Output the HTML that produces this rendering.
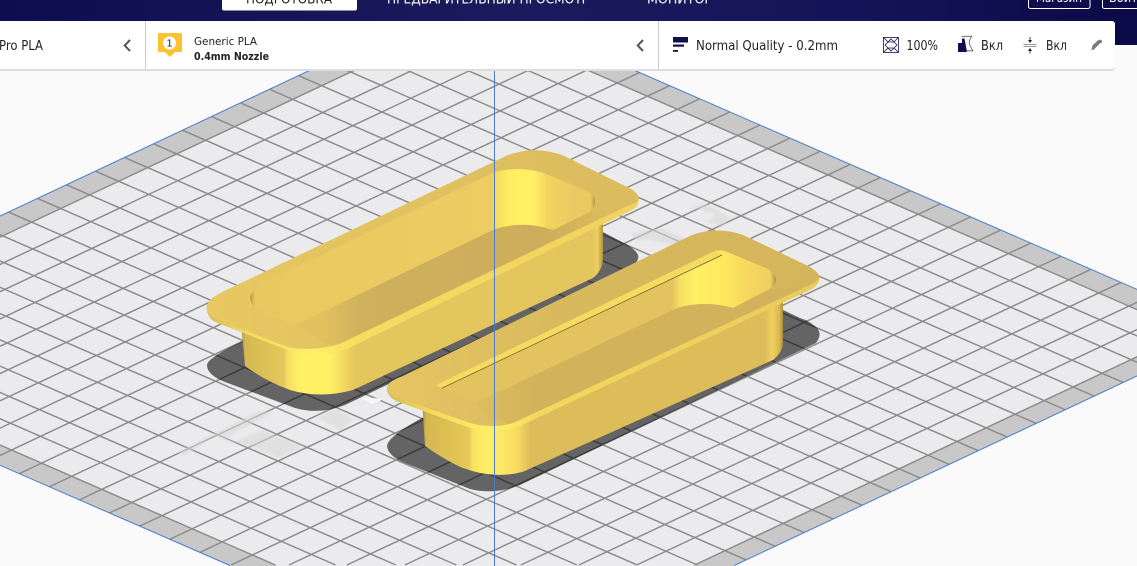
<!DOCTYPE html>
<html lang="ru">
<head>
<meta charset="utf-8">
<title>Cura</title>
<style>
html,body{margin:0;padding:0;width:1137px;height:566px;overflow:hidden;background:#fafafa}
svg{display:block;position:absolute;left:0;top:0}
text{font-family:"DejaVu Sans","Liberation Sans",sans-serif;fill:#222}
</style>
</head>
<body>
<svg width="1137" height="566" viewBox="0 0 1137 566" xmlns="http://www.w3.org/2000/svg">
<defs>
<linearGradient id="hdr" x1="0" x2="1137" y1="0" y2="0" gradientUnits="userSpaceOnUse">
<stop offset="0" stop-color="#0d0e4f"/><stop offset=".45" stop-color="#1a1a5c"/><stop offset=".75" stop-color="#14145a"/><stop offset="1" stop-color="#0a0a48"/>
</linearGradient>
<linearGradient id="wallA" x1="241" x2="603" y1="0" y2="0" gradientUnits="userSpaceOnUse">
<stop offset="0" stop-color="#a88c40"/><stop offset=".012" stop-color="#d5b850"/><stop offset=".12" stop-color="#e5c85c"/><stop offset=".127" stop-color="#f6dc60"/><stop offset=".16" stop-color="#fff066"/><stop offset=".245" stop-color="#fff066"/><stop offset=".29" stop-color="#f2d45e"/><stop offset=".315" stop-color="#e4c65f"/><stop offset=".97" stop-color="#e4c65f"/><stop offset=".985" stop-color="#f0d060"/><stop offset="1" stop-color="#b0943f"/>
</linearGradient>
<linearGradient id="wallB" x1="422" x2="783" y1="0" y2="0" gradientUnits="userSpaceOnUse">
<stop offset="0" stop-color="#a88c40"/><stop offset=".012" stop-color="#d5b850"/><stop offset=".13" stop-color="#e6c858"/><stop offset=".14" stop-color="#f8e261"/><stop offset=".18" stop-color="#fff066"/><stop offset=".26" stop-color="#f9de60"/><stop offset=".3" stop-color="#dcbd5a"/><stop offset=".95" stop-color="#dcbd5a"/><stop offset=".97" stop-color="#f0d05f"/><stop offset=".99" stop-color="#d8b850"/><stop offset="1" stop-color="#a88c40"/>
</linearGradient>
<linearGradient id="rimA" x1="206" x2="640" y1="0" y2="0" gradientUnits="userSpaceOnUse">
<stop offset="0" stop-color="#d8bb50"/><stop offset=".1" stop-color="#f4d95f"/><stop offset=".25" stop-color="#fff066"/><stop offset=".35" stop-color="#f7dc60"/><stop offset="1" stop-color="#f0d25e"/>
</linearGradient>
<linearGradient id="rimB" x1="387" x2="820" y1="0" y2="0" gradientUnits="userSpaceOnUse">
<stop offset="0" stop-color="#d8bb50"/><stop offset=".1" stop-color="#f4d95f"/><stop offset=".25" stop-color="#fff066"/><stop offset=".35" stop-color="#f3d85f"/><stop offset="1" stop-color="#eacb5c"/>
</linearGradient>
<linearGradient id="topA" x1="206" x2="640" y1="0" y2="0" gradientUnits="userSpaceOnUse">
<stop offset="0" stop-color="#e8c862"/><stop offset="1" stop-color="#dabb5e"/>
</linearGradient>
<linearGradient id="topB" x1="387" x2="820" y1="0" y2="0" gradientUnits="userSpaceOnUse">
<stop offset="0" stop-color="#e6c662"/><stop offset=".4" stop-color="#d8b95d"/><stop offset="1" stop-color="#d4b55c"/>
</linearGradient>
<linearGradient id="holeA" x1="250" x2="596" y1="0" y2="0" gradientUnits="userSpaceOnUse">
<stop offset="0" stop-color="#b89c48"/><stop offset=".015" stop-color="#e8c860"/><stop offset=".7" stop-color="#edcd62"/><stop offset=".713" stop-color="#f5dc5f"/><stop offset=".75" stop-color="#ffee60"/><stop offset=".82" stop-color="#fff066"/><stop offset=".86" stop-color="#f3d45e"/><stop offset=".94" stop-color="#eac963"/><stop offset=".985" stop-color="#eac963"/><stop offset="1" stop-color="#a58a40"/>
</linearGradient>
<linearGradient id="holeB" x1="437" x2="777" y1="0" y2="0" gradientUnits="userSpaceOnUse">
<stop offset="0" stop-color="#e3c360"/><stop offset=".69" stop-color="#e3c360"/><stop offset=".715" stop-color="#f7e060"/><stop offset=".76" stop-color="#fff066"/><stop offset=".85" stop-color="#ffe75f"/><stop offset=".91" stop-color="#f6d85f"/><stop offset=".98" stop-color="#f0cf62"/><stop offset="1" stop-color="#a58a40"/>
</linearGradient>
<linearGradient id="floorA" x1="295" x2="600" y1="0" y2="0" gradientUnits="userSpaceOnUse">
<stop offset="0" stop-color="#e4c461"/><stop offset=".1" stop-color="#e0c05f"/><stop offset=".22" stop-color="#cfb15c"/><stop offset=".8" stop-color="#cbad5b"/><stop offset="1" stop-color="#d9ba5d"/>
</linearGradient>
<linearGradient id="floorB" x1="475" x2="800" y1="0" y2="0" gradientUnits="userSpaceOnUse">
<stop offset="0" stop-color="#ddbe5f"/><stop offset=".18" stop-color="#d2b35c"/><stop offset="1" stop-color="#d2b35c"/>
</linearGradient>
<filter id="bl" x="-10%" y="-10%" width="120%" height="120%"><feGaussianBlur stdDeviation="1"/></filter>
</defs>

<rect width="1137" height="566" fill="#fafafa"/>

<!-- build plate -->
<path d="M465.85-3.16L1232.5 331L733.2 566H231.2L-274.8 345.46Z" fill="#c8c8c8"/>
<path d="M466.7 17.45L1189.1 332.3L692.6 566H277.6L-229.3 345.05Z" fill="#ebebed"/>
<path fill="none" stroke="#8b8b8b" stroke-width="1.45" d="M443.52 7.35l766.65 334.17M414.52 21l766.65 334.17M385.52 34.65l766.65 334.17M356.52 48.3l766.65 334.17M327.52 61.95l766.65 334.17M298.52 75.6l766.65 334.17M269.52 89.25l766.65 334.17M240.52 102.9l766.65 334.17M211.52 116.55l766.65 334.17M182.52 130.2l766.65 334.17M153.52 143.85l766.65 334.17M124.52 157.5l766.65 334.17M95.52 171.15l766.65 334.17M66.52 184.8l766.65 334.17M37.52 198.45l766.65 334.17M8.52 212.1l766.65 334.17M-20.48 225.75l766.65 334.17M-49.48 239.4l747 325.6M-78.48 253.05l715.7 311.95M-107.48 266.7l684.4 298.3M-136.48 280.35l653 284.65M-165.48 294l621.7 271M-194.48 307.65l590.4 257.35M-223.48 321.3l559.1 243.7M-252.48 334.95l527.8 230.05"/>
<path fill="none" stroke="#8b8b8b" stroke-width="1.45" d="M-251.63 355.56l740.66-348.62M-221.53 368.68l740.66-348.62M-191.43 381.8l740.66-348.62M-161.33 394.92l740.66-348.62M-131.23 408.04l740.66-348.62M-101.13 421.16l740.66-348.62M-71.03 434.28l740.66-348.62M-40.93 447.4l740.66-348.62M-10.83 460.52l740.66-348.62M19.27 473.64l740.66-348.62M49.37 486.76l740.66-348.62M79.47 499.88l740.66-348.62M109.57 513l740.66-348.62M139.67 526.12l740.66-348.62M169.77 539.24l740.66-348.62M199.87 552.36l740.66-348.62M231 565L970.63 216.86M289 565L1000.73 229.98M346.9 565L1030.83 243.1M404.9 565L1060.93 256.22M462.9 565L1091.03 269.34M520.8 565L1121.13 282.46M578.8 565L1151.23 295.58M636.7 565L1181.33 308.7M694.6 565L1211.43 321.82"/>
<path d="M230 565.5L-274.8 345.46L465.85-3.16L1232.5 331L734.3 565.5" fill="none" stroke="#4a7cc8" stroke-width="1"/>

<!-- ghost reflections -->
<g filter="url(#bl)" fill="#d8d8d8" opacity=".55">
<path d="M178 452L258 411 275 412 226 438 280 458 303 446 262 430 232 443 214 436 184 456Z"/>
<path d="M317 417L337 408 353 420 340 430Z"/>
<path d="M630 233L660 228 690 240 680 246 650 240 636 240Z"/>
<path d="M690 207L705 203 730 217 723 226 706 222 716 214Z"/>
</g>
<path d="M360 397L384 399 372 404Z" fill="#f6f6f6"/>

<!-- shadows -->
<g style="mix-blend-mode:multiply" fill="#6c6c6c">
<path d="M245 340Q207 358 207 365Q207 375 225 382L295 408Q320 415 345 405L625 271Q640 263 638 255Q635 248 620 241L603 232L500 300Z"/>
<path d="M424 417Q388 436 387 446Q388 456 405 463L470 489Q495 495 520 485L816 343Q822 335 818 329Q810 321 800 318L783 310L600 400Z"/>
</g>

<!-- object 1 -->
<path d="M241.7 330L245 366Q265 381 290 390Q320 399 353 390L593 278Q603 270 603 258V222Z" fill="url(#wallA)"/>
<path d="M206.7 308Q206 300 223 291.7L506 156Q533 145 562 155L627 187Q640 193 638.5 203Q637 208 630 211L347 349Q320 358 290 351L215 322Q207 317 206.7 308Z" fill="url(#rimA)"/>
<path d="M206.7 308Q206 300 223 291.7L506 156Q533 145 562 155L627 187Q640 193 638.5 200Q636 203 627 206L340 344Q315 352 287 347L214 318Q207 314 206.7 308Z" fill="url(#topA)"/>
<path d="M250 298Q250 292 262 283L495 171.7Q520 166 543 172.7L585 190Q596 196 595 202Q595 208 588 213L553 230L295 325L263 313Q251 306 250 298Z" fill="url(#holeA)"/>
<path d="M295 325L495 229Q525 220 553 230L588 213L624 206.5L340 343.5Q322 347 312 333Z" fill="url(#floorA)"/>

<!-- object 2 -->
<path d="M422.7 410L425 446Q445 460 460 466.7Q493 480 523 471.7L773 360Q783 352 783 342V300Z" fill="url(#wallB)"/>
<path d="M387 388Q387 382 403 376L692 235Q717 226 743 235L806 265Q820 272 819.5 280Q818 285 812 289L520 426Q495 434 470 428L396 401Q387 396 387 388Z" fill="url(#rimB)"/>
<path d="M387 388Q387 382 403 376L692 235Q717 226 743 235L806 265Q820 272 819.5 278Q816 282 810 285L513 423Q493 429 470 423L396 397Q388 393 387 388Z" fill="url(#topB)"/>
<path d="M436.7 385L720 250L726.7 251.7L766.7 268.3Q777 275 776 280Q776 285 768 290L733 308Q705 300 677 308L475 403Z" fill="url(#holeB)"/>
<path d="M475 403L677 308Q705 300 733 308L768 290L806 285.5L513 423L490 419Z" fill="url(#floorB)"/>
<path d="M436 385L716.7 250L721.7 254.5L441.7 388.3Z" fill="#f5dc60"/>
<path d="M441.7 388.3L722 255" stroke="#6b5826" stroke-width=".7" fill="none"/>

<!-- vertical axis line -->
<rect x="494" y="70" width="1" height="496" fill="#4a7cc8"/>

<!-- header -->
<rect width="1137" height="21" fill="url(#hdr)"/>
<rect x="1100" y="21" width="37" height="24" fill="#0a0a48"/>
<rect x="222" y="-4" width="135" height="14.5" rx="2" fill="#fff"/>
<text x="246" y="3.5" font-size="13" textLength="86" lengthAdjust="spacingAndGlyphs">ПОДГОТОВКА</text>
<text x="387" y="3.5" font-size="13" textLength="202" lengthAdjust="spacingAndGlyphs" style="fill:#fff">ПРЕДВАРИТЕЛЬНЫЙ ПРОСМОТР</text>
<text x="647" y="3.5" font-size="13" textLength="65" lengthAdjust="spacingAndGlyphs" style="fill:#fff">МОНИТОР</text>
<rect x="1028.5" y="-5" width="61.5" height="13.5" rx="2" fill="none" stroke="#fff"/>
<rect x="1102.5" y="-5" width="60" height="13.5" rx="2" fill="none" stroke="#fff"/>
<text x="1036" y="2" font-size="12" textLength="46" lengthAdjust="spacingAndGlyphs" style="fill:#fff">Магазин</text>
<text x="1109" y="2" font-size="12" textLength="36" lengthAdjust="spacingAndGlyphs" style="fill:#fff">Войти</text>

<!-- toolbar -->
<rect x="-6" y="23" width="1121" height="48" rx="3" fill="#dedede"/>
<rect x="-6" y="21" width="1121" height="48" rx="3" fill="#fff"/>
<rect x="145" y="21" width="1" height="48" fill="#c9c9c9"/>
<rect x="658" y="21" width="1" height="48" fill="#c9c9c9"/>

<text x="-1" y="50" font-size="13.5" textLength="44" lengthAdjust="spacingAndGlyphs">Pro PLA</text>
<path d="M130 40L124.7 45.5L130 51" fill="none" stroke="#555" stroke-width="2"/>

<path d="M159 33H181a1 1 0 0 1 1 1V51a1 1 0 0 1-1 1H175L170 57L165 52H159a1 1 0 0 1-1-1V34a1 1 0 0 1 1-1Z" fill="#fdc02f"/>
<circle cx="169.5" cy="43" r="6.5" fill="#fff"/>
<text x="169.5" y="46.7" font-size="10" text-anchor="middle">1</text>
<text x="194" y="45" font-size="11" textLength="63" lengthAdjust="spacingAndGlyphs">Generic PLA</text>
<text x="194" y="60" font-size="11" font-weight="700" textLength="75" lengthAdjust="spacingAndGlyphs">0.4mm Nozzle</text>

<path d="M643 40L637.7 45.5L643 51" fill="none" stroke="#555" stroke-width="2"/>

<rect x="673" y="37" width="15" height="5.5" fill="#10104f"/>
<rect x="673" y="44.5" width="11" height="2.2" fill="#10104f"/>
<rect x="673" y="50" width="5" height="1.8" fill="#10104f"/>
<text x="696" y="50" font-size="13" textLength="142" lengthAdjust="spacingAndGlyphs">Normal Quality - 0.2mm</text>

<g fill="none" stroke="#10104f" stroke-width=".8">
<rect x="883.4" y="37.4" width="15" height="15"/>
<path d="M883.4 37.4L888 42H894L898.4 37.4M883.4 52.4L888 48H894L898.4 52.4M888 42L885 45L888 48M894 42L897 45L894 48M888 42L891 39L894 42M888 48L891 51L894 48"/>
</g>
<text x="906.5" y="50" font-size="13" textLength="31.5" lengthAdjust="spacingAndGlyphs">100%</text>

<path d="M958 52V43H962V38.5H964.5L967 52Z" fill="#10104f"/>
<path d="M961.7 36.3H971.7Q968.5 41 969.5 44T973 50.8H966" fill="none" stroke="#555" stroke-width=".8"/>
<text x="981" y="50" font-size="13" textLength="22" lengthAdjust="spacingAndGlyphs">Вкл</text>

<path d="M1023.5 44.5H1036.5M1023.5 46.5H1036.5" stroke="#777" stroke-width=".7"/>
<path d="M1030 37V42M1030 48.5V53.5" stroke="#10104f" stroke-width=".8"/>
<path d="M1028 40L1030 43L1032 40ZM1028 51L1030 48L1032 51Z" fill="#10104f"/>
<text x="1046" y="50" font-size="13" textLength="21" lengthAdjust="spacingAndGlyphs">Вкл</text>

<path d="M1093.4 47.3L1099.4 41.3" stroke="#777" stroke-width="3.6"/>
<path d="M1091.5 50L1092.2 46.2L1095.2 49.2Z" fill="#777"/>
<path d="M1099.5 39.8L1100.8 39.8L1102 41V42.2L1101 43.2L1098.5 40.8Z" fill="#777"/>
</svg>
</body>
</html>
